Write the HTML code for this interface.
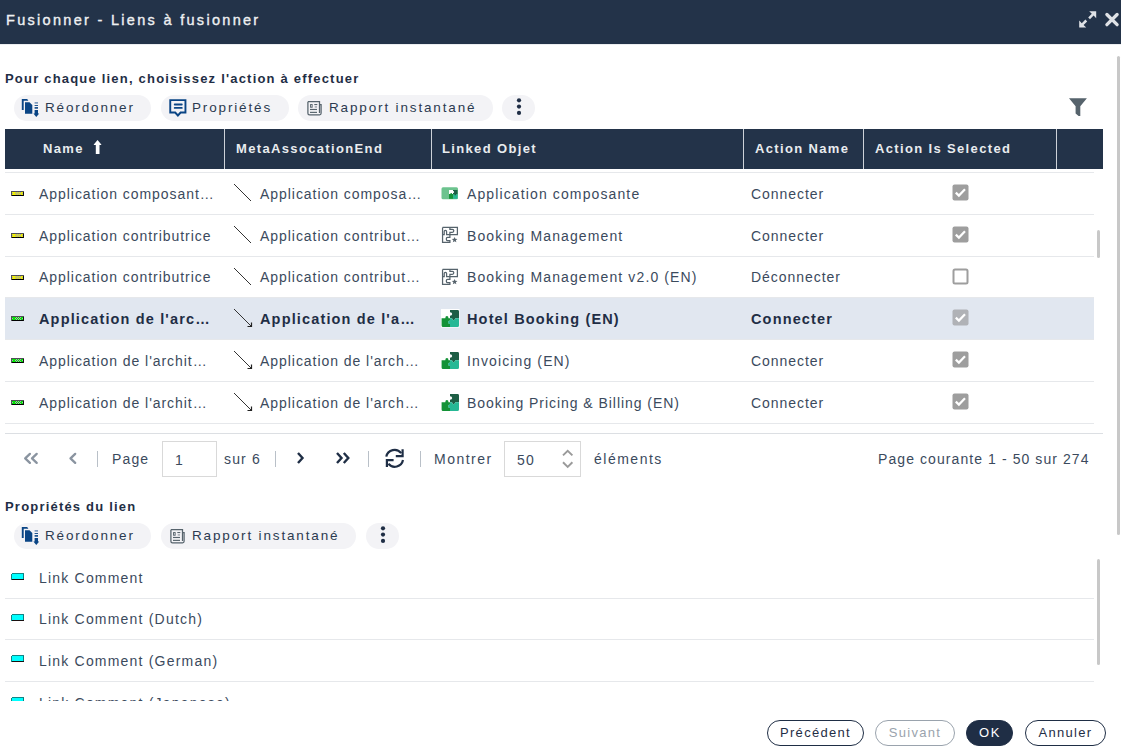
<!DOCTYPE html>
<html><head><meta charset="utf-8">
<style>
*{box-sizing:border-box;margin:0;padding:0}
html,body{width:1121px;height:753px;overflow:hidden;background:#fff;font-family:"Liberation Sans",sans-serif;color:#3b4a5d}
.a{position:absolute;white-space:nowrap}
#title{left:0;top:0;width:1121px;height:44px;background:#233349}
#title .t{left:6px;top:12px;font-size:14.5px;font-weight:400;color:#eef0f2;letter-spacing:2.3px;-webkit-text-stroke:0.35px #eef0f2}
.h2{font-size:13px;font-weight:700;color:#1f2e45;letter-spacing:1.2px}
.pill{position:absolute;height:26px;border-radius:13px;background:#f3f3f6}
.pt{font-size:13.5px;letter-spacing:1.85px;color:#2b3a50}
.hdr{left:5px;top:129px;width:1098px;height:40px;background:#233349}
.hc{position:absolute;top:0;height:40px;width:1px;background:#cdd2d8}
.ht{position:absolute;top:12px;font-size:13px;font-weight:700;color:#e9ecef;letter-spacing:1.35px;white-space:nowrap}
.line{position:absolute;height:1px;background:#e6e8eb}
.rt{font-size:14px;letter-spacing:0.95px;color:#3b4a5d}
.rt.b{font-weight:700;color:#1f2e45;font-size:14.5px;letter-spacing:1.15px}
.pg{font-size:14px;letter-spacing:1.15px;color:#3b4a5d}
.lc{letter-spacing:1.2px}
.sep{position:absolute;width:1px;height:16px;background:#b9c0c8}
.btn{position:absolute;top:720px;height:26px;border-radius:13px;border:1px solid #1f2e45;font-size:13px;letter-spacing:1.3px;color:#1f2e45;text-align:center;line-height:24px}
</style></head>
<body>
<div id="title" class="a"><div class="a t">Fusionner - Liens à fusionner</div>
<svg class="a" style="left:1078px;top:10px" width="20" height="19" viewBox="0 0 20 19">
<path d="M11.2 1.2 H18.2 V8.2 L15.6 5.6 L12 9.2 L10.2 7.4 L13.8 3.8 Z" fill="#dfe2e6"/>
<path d="M1.2 17.6 V10.6 L3.8 13.2 L7.4 9.6 L9.2 11.4 L5.6 15 L8.2 17.6 Z" fill="#dfe2e6"/>
</svg>
<svg class="a" style="left:1104px;top:12px" width="16" height="16" viewBox="0 0 16 16">
<path d="M2.9 2.5 L13.1 12.7 M13.1 2.5 L2.9 12.7" stroke="#dfe2e6" stroke-width="3.3" stroke-linecap="round"/>
</svg>
</div>
<div class="a" style="left:0;top:44px;width:1121px;height:1px;background:#ebedf0"></div>
<div class="a" style="left:1117px;top:56px;width:3px;height:479px;border-radius:1.5px;background:#c8c8c8"></div>

<div class="a h2" style="left:5px;top:71px">Pour chaque lien, choisissez l'action à effectuer</div>

<div class="pill" style="left:14px;top:95px;width:137px"></div>
<div class="pill" style="left:161px;top:95px;width:128px"></div>
<div class="pill" style="left:298px;top:95px;width:195px"></div>
<div class="pill" style="left:502px;top:95px;width:33px"></div>
<svg class="a" style="left:18px;top:97px" width="22" height="21" viewBox="0 0 22 21"><path d="M3.8 2 H9.2 L10.4 3.8 H5.7 V13 H3.8 Z" fill="#0a4585"/><path d="M7 5.2 H11.5 L14.3 8 V16.7 H7 Z" fill="#0a4585"/><g fill="#0a4585"><rect x="16.6" y="5.2" width="3.4" height="1.4" opacity="0.6"/><rect x="16.6" y="8" width="3.4" height="0.9"/><rect x="16.6" y="10.1" width="3.4" height="1.6"/><rect x="16.6" y="13" width="3.4" height="4"/><path d="M15.4 16.6 H21.2 L18.3 20 Z"/></g></svg>
<svg class="a" style="left:166px;top:96px" width="24" height="24" viewBox="0 0 24 24"><path d="M4.25 4.15 H19.45 V16.55 H14.6 L11.9 19.5 L9.2 16.55 H4.25 Z" fill="none" stroke="#0a4585" stroke-width="1.9" stroke-linejoin="miter"/><rect x="7.8" y="7.6" width="8.9" height="1.8" rx="0.9" fill="#0a4585"/><rect x="7.8" y="11" width="8.9" height="1.8" rx="0.9" fill="#0a4585"/></svg>
<svg class="a" style="left:302px;top:97px" width="22" height="22" viewBox="0 0 22 22"><g fill="none" stroke="#56636c" stroke-width="1.25"><path d="M5.9 4.7 H17.5 V15.9"/><path d="M5.9 4.7 V16.2 Q5.9 17.8 7.5 17.8 H17.6 Q19.1 17.8 19.1 16.3 V7.7 H17.5"/><rect x="8.7" y="7.7" width="1.3" height="2.4"/></g><g fill="#56636c"><rect x="12.3" y="7" width="3" height="1.1"/><rect x="12.7" y="9.4" width="2.3" height="1.1" opacity="0.7"/><rect x="8" y="11.9" width="7" height="1.15"/><rect x="8" y="14.8" width="7" height="1.15"/></g></svg>
<svg class="a" style="left:515px;top:98px" width="8" height="18" viewBox="0 0 8 18"><circle cx="4" cy="2.3" r="2.1" fill="#1f2e45"/><circle cx="4" cy="8.6" r="2.1" fill="#1f2e45"/><circle cx="4" cy="14.9" r="2.1" fill="#1f2e45"/></svg>
<div class="a pt" style="left:45px;top:100px">Réordonner</div>
<div class="a pt" style="left:192px;top:100px">Propriétés</div>
<div class="a pt" style="left:329px;top:100px">Rapport instantané</div>

<svg class="a" style="left:1068px;top:97px" width="20" height="20" viewBox="0 0 20 20">
<path d="M1 1.3 H18.9 L12.3 9.2 V19 H10.6 L7.6 16.6 V9.2 Z" fill="#56636c"/>
</svg>

<div class="a hdr">
  <div class="ht" style="left:38px">Name</div>
  <svg class="a" style="left:88px;top:10px" width="10" height="17" viewBox="0 0 10 17"><path d="M4.55 1 L8.3 5.4 V5.9 H6.5 V15.1 H2.8 V5.9 H0.8 V5.4 Z" fill="#fff"/></svg>
  <div class="hc" style="left:219px"></div>
  <div class="ht" style="left:231px">MetaAssocationEnd</div>
  <div class="hc" style="left:426px"></div>
  <div class="ht" style="left:437px">Linked Objet</div>
  <div class="hc" style="left:738px"></div>
  <div class="ht" style="left:750px">Action Name</div>
  <div class="hc" style="left:858px"></div>
  <div class="ht" style="left:870px">Action Is Selected</div>
  <div class="hc" style="left:1051px"></div>
</div>

<svg class="a" style="left:11px;top:191px" width="13" height="5" viewBox="0 0 13 5" shape-rendering="crispEdges"><rect x="0" y="0" width="13" height="5" fill="#505058"/><rect x="1" y="4" width="12" height="1" fill="#000"/><rect x="12" y="1" width="1" height="4" fill="#111"/><rect x="1" y="1" width="11" height="3" fill="#f2f200"/><g fill="#a0a0b0"><rect x="5" y="1" width="1" height="1"/><rect x="7" y="1" width="1" height="1"/><rect x="9" y="1" width="1" height="1"/><rect x="1" y="2" width="1" height="1"/><rect x="4" y="2" width="1" height="1"/><rect x="6" y="2" width="1" height="1"/><rect x="8" y="2" width="1" height="1"/><rect x="11" y="2" width="1" height="1"/><rect x="5" y="3" width="1" height="1"/><rect x="7" y="3" width="1" height="1"/><rect x="9" y="3" width="1" height="1"/></g></svg>
<div class="a rt" style="left:39px;top:186px">Application composant…</div>
<svg class="a" style="left:233px;top:183px" width="20" height="20" viewBox="0 0 20 20"><line x1="1" y1="1" x2="18" y2="18" stroke="#333" stroke-width="1"/></svg>
<div class="a rt" style="left:260px;top:186px">Application composa…</div>
<svg class="a" style="left:441px;top:187px" width="18" height="13" viewBox="0 0 18 13"><rect x="0.5" y="0.2" width="16.5" height="12" rx="1.5" fill="#6cc38e"/><rect x="8" y="3" width="4.5" height="4" fill="#fff"/><rect x="12" y="3" width="4.5" height="4.3" fill="#1d5e45"/><rect x="8" y="7" width="4.3" height="4.8" fill="#169238"/><rect x="12.3" y="7.3" width="4.2" height="4.5" fill="#27b795"/><circle cx="12.2" cy="5" r="0.9" fill="#fff"/><circle cx="10.2" cy="7" r="0.9" fill="#169238"/><circle cx="14.3" cy="7.4" r="0.9" fill="#1d5e45"/></svg>
<div class="a rt" style="left:467px;top:186px;letter-spacing:1.12px">Application composante</div>
<div class="a rt" style="left:751px;top:186px">Connecter</div>
<svg class="a" style="left:952px;top:184px" width="17" height="17" viewBox="0 0 17 17"><rect x="0.5" y="0.5" width="16" height="16" rx="2" fill="#9e9e9e"/><path d="M3.8 8.6 L6.9 11.6 L13 5.3" fill="none" stroke="#fff" stroke-width="2.2"/></svg>
<svg class="a" style="left:11px;top:233px" width="13" height="5" viewBox="0 0 13 5" shape-rendering="crispEdges"><rect x="0" y="0" width="13" height="5" fill="#505058"/><rect x="1" y="4" width="12" height="1" fill="#000"/><rect x="12" y="1" width="1" height="4" fill="#111"/><rect x="1" y="1" width="11" height="3" fill="#f2f200"/><g fill="#a0a0b0"><rect x="5" y="1" width="1" height="1"/><rect x="7" y="1" width="1" height="1"/><rect x="9" y="1" width="1" height="1"/><rect x="1" y="2" width="1" height="1"/><rect x="4" y="2" width="1" height="1"/><rect x="6" y="2" width="1" height="1"/><rect x="8" y="2" width="1" height="1"/><rect x="11" y="2" width="1" height="1"/><rect x="5" y="3" width="1" height="1"/><rect x="7" y="3" width="1" height="1"/><rect x="9" y="3" width="1" height="1"/></g></svg>
<div class="a rt" style="left:39px;top:228px">Application contributrice</div>
<svg class="a" style="left:233px;top:225px" width="20" height="20" viewBox="0 0 20 20"><line x1="1" y1="1" x2="18" y2="18" stroke="#333" stroke-width="1"/></svg>
<div class="a rt" style="left:260px;top:228px">Application contribut…</div>
<svg class="a" style="left:438px;top:222px" width="24" height="26" viewBox="0 0 24 26"><g fill="none" stroke="#56636c" stroke-width="1.25"><path d="M4.56 5.42 H19.4 V12.67 H8.6 V9.6 Q8.6 8.3 7.4 8.3 Q6.2 8.3 6.2 9.6 V12.67 H4.56"/><path d="M4.56 5.42 V20.27 H11.9 V18.6 H9.6 Q8.3 18.6 8.3 17 Q8.3 15.3 9.6 15.3 H11.9 V12.67"/><path d="M11.9 5.42 V7.3 H14.3 Q15.8 7.3 15.8 8.8 Q15.8 10.3 14.3 10.3 H11.9 V12.67"/></g><path d="M16.60 14.90 L17.36 16.85 L19.45 16.97 L17.84 18.30 L18.36 20.33 L16.60 19.20 L14.84 20.33 L15.36 18.30 L13.75 16.97 L15.84 16.85 Z" fill="#56636c"/></svg>
<div class="a rt" style="left:467px;top:228px;letter-spacing:1.12px">Booking Management</div>
<div class="a rt" style="left:751px;top:228px">Connecter</div>
<svg class="a" style="left:952px;top:226px" width="17" height="17" viewBox="0 0 17 17"><rect x="0.5" y="0.5" width="16" height="16" rx="2" fill="#9e9e9e"/><path d="M3.8 8.6 L6.9 11.6 L13 5.3" fill="none" stroke="#fff" stroke-width="2.2"/></svg>
<svg class="a" style="left:11px;top:275px" width="13" height="5" viewBox="0 0 13 5" shape-rendering="crispEdges"><rect x="0" y="0" width="13" height="5" fill="#505058"/><rect x="1" y="4" width="12" height="1" fill="#000"/><rect x="12" y="1" width="1" height="4" fill="#111"/><rect x="1" y="1" width="11" height="3" fill="#f2f200"/><g fill="#a0a0b0"><rect x="5" y="1" width="1" height="1"/><rect x="7" y="1" width="1" height="1"/><rect x="9" y="1" width="1" height="1"/><rect x="1" y="2" width="1" height="1"/><rect x="4" y="2" width="1" height="1"/><rect x="6" y="2" width="1" height="1"/><rect x="8" y="2" width="1" height="1"/><rect x="11" y="2" width="1" height="1"/><rect x="5" y="3" width="1" height="1"/><rect x="7" y="3" width="1" height="1"/><rect x="9" y="3" width="1" height="1"/></g></svg>
<div class="a rt" style="left:39px;top:269px">Application contributrice</div>
<svg class="a" style="left:233px;top:267px" width="20" height="20" viewBox="0 0 20 20"><line x1="1" y1="1" x2="18" y2="18" stroke="#333" stroke-width="1"/></svg>
<div class="a rt" style="left:260px;top:269px">Application contribut…</div>
<svg class="a" style="left:438px;top:264px" width="24" height="26" viewBox="0 0 24 26"><g fill="none" stroke="#56636c" stroke-width="1.25"><path d="M4.56 5.42 H19.4 V12.67 H8.6 V9.6 Q8.6 8.3 7.4 8.3 Q6.2 8.3 6.2 9.6 V12.67 H4.56"/><path d="M4.56 5.42 V20.27 H11.9 V18.6 H9.6 Q8.3 18.6 8.3 17 Q8.3 15.3 9.6 15.3 H11.9 V12.67"/><path d="M11.9 5.42 V7.3 H14.3 Q15.8 7.3 15.8 8.8 Q15.8 10.3 14.3 10.3 H11.9 V12.67"/></g><path d="M16.60 14.90 L17.36 16.85 L19.45 16.97 L17.84 18.30 L18.36 20.33 L16.60 19.20 L14.84 20.33 L15.36 18.30 L13.75 16.97 L15.84 16.85 Z" fill="#56636c"/></svg>
<div class="a rt" style="left:467px;top:269px;letter-spacing:1.12px">Booking Management v2.0 (EN)</div>
<div class="a rt" style="left:751px;top:269px">Déconnecter</div>
<svg class="a" style="left:952px;top:268px" width="17" height="17" viewBox="0 0 17 17"><rect x="1.5" y="1.5" width="14" height="14" rx="1.5" fill="#fff" stroke="#9e9e9e" stroke-width="2"/></svg>
<div class="a" style="left:5px;top:298px;width:1089px;height:42px;background:#e1e7f0"></div>
<svg class="a" style="left:11px;top:316px" width="13" height="5" viewBox="0 0 13 5" shape-rendering="crispEdges"><rect x="0" y="0" width="13" height="5" fill="#505058"/><rect x="1" y="4" width="12" height="1" fill="#000"/><rect x="12" y="1" width="1" height="4" fill="#111"/><rect x="1" y="1" width="11" height="3" fill="#00e600"/><g fill="#b0a0b8"><rect x="5" y="1" width="1" height="1"/><rect x="7" y="1" width="1" height="1"/><rect x="9" y="1" width="1" height="1"/><rect x="1" y="2" width="1" height="1"/><rect x="4" y="2" width="1" height="1"/><rect x="6" y="2" width="1" height="1"/><rect x="8" y="2" width="1" height="1"/><rect x="11" y="2" width="1" height="1"/><rect x="5" y="3" width="1" height="1"/><rect x="7" y="3" width="1" height="1"/><rect x="9" y="3" width="1" height="1"/></g></svg>
<div class="a rt b" style="left:39px;top:311px">Application de l'arc…</div>
<svg class="a" style="left:233px;top:308px" width="20" height="20" viewBox="0 0 20 20"><line x1="1" y1="1" x2="18" y2="18" stroke="#333" stroke-width="1"/><path d="M14.5 18.5 H18.5 V14.5" fill="none" stroke="#222" stroke-width="1.2"/></svg>
<div class="a rt b" style="left:260px;top:311px">Application de l'a…</div>
<svg class="a" style="left:441px;top:309px" width="19" height="19" viewBox="0 0 19 19"><rect x="0" y="0" width="18.5" height="18.5" fill="#fff"/><path d="M9 1 H17 Q18 1 18 2.5 V9.2 H14.2 Q13.8 11.2 12.6 11.2 Q11.4 11.2 11 9.2 H9 V6.8 Q11.2 6.8 11.2 5 Q11.2 3.3 9 3.3 Z" fill="#1d5e45"/><path d="M9 9.2 H11 Q11.4 11.2 12.6 11.2 Q13.8 11.2 14.2 9.2 H18 V16.5 Q18 18 16.5 18 H9 V15 Q7 15 7 13.3 Q7 11.6 9 11.6 Z" fill="#26b895"/><path d="M0.6 9.2 H4.3 Q4.3 7 5.9 7 Q7.5 7 7.5 9.2 H9 V11.6 Q7 11.6 7 13.3 Q7 15 9 15 V18 H2 Q0.6 18 0.6 16.5 Z" fill="#139236"/></svg>
<div class="a rt b" style="left:467px;top:311px">Hotel Booking (EN)</div>
<div class="a rt b" style="left:751px;top:311px">Connecter</div>
<svg class="a" style="left:952px;top:309px" width="17" height="17" viewBox="0 0 17 17"><rect x="0.5" y="0.5" width="16" height="16" rx="2" fill="#b0b2b6"/><path d="M3.8 8.6 L6.9 11.6 L13 5.3" fill="none" stroke="#fff" stroke-width="2.2"/></svg>
<svg class="a" style="left:11px;top:358px" width="13" height="5" viewBox="0 0 13 5" shape-rendering="crispEdges"><rect x="0" y="0" width="13" height="5" fill="#505058"/><rect x="1" y="4" width="12" height="1" fill="#000"/><rect x="12" y="1" width="1" height="4" fill="#111"/><rect x="1" y="1" width="11" height="3" fill="#00e600"/><g fill="#b0a0b8"><rect x="5" y="1" width="1" height="1"/><rect x="7" y="1" width="1" height="1"/><rect x="9" y="1" width="1" height="1"/><rect x="1" y="2" width="1" height="1"/><rect x="4" y="2" width="1" height="1"/><rect x="6" y="2" width="1" height="1"/><rect x="8" y="2" width="1" height="1"/><rect x="11" y="2" width="1" height="1"/><rect x="5" y="3" width="1" height="1"/><rect x="7" y="3" width="1" height="1"/><rect x="9" y="3" width="1" height="1"/></g></svg>
<div class="a rt" style="left:39px;top:353px">Application de l'archit…</div>
<svg class="a" style="left:233px;top:350px" width="20" height="20" viewBox="0 0 20 20"><line x1="1" y1="1" x2="18" y2="18" stroke="#333" stroke-width="1"/><path d="M14.5 18.5 H18.5 V14.5" fill="none" stroke="#222" stroke-width="1.2"/></svg>
<div class="a rt" style="left:260px;top:353px">Application de l'arch…</div>
<svg class="a" style="left:441px;top:351px" width="19" height="19" viewBox="0 0 19 19"><path d="M9 1 H17 Q18 1 18 2.5 V9.2 H14.2 Q13.8 11.2 12.6 11.2 Q11.4 11.2 11 9.2 H9 V6.8 Q11.2 6.8 11.2 5 Q11.2 3.3 9 3.3 Z" fill="#1d5e45"/><path d="M9 9.2 H11 Q11.4 11.2 12.6 11.2 Q13.8 11.2 14.2 9.2 H18 V16.5 Q18 18 16.5 18 H9 V15 Q7 15 7 13.3 Q7 11.6 9 11.6 Z" fill="#26b895"/><path d="M0.6 9.2 H4.3 Q4.3 7 5.9 7 Q7.5 7 7.5 9.2 H9 V11.6 Q7 11.6 7 13.3 Q7 15 9 15 V18 H2 Q0.6 18 0.6 16.5 Z" fill="#139236"/></svg>
<div class="a rt" style="left:467px;top:353px;letter-spacing:1.12px">Invoicing (EN)</div>
<div class="a rt" style="left:751px;top:353px">Connecter</div>
<svg class="a" style="left:952px;top:351px" width="17" height="17" viewBox="0 0 17 17"><rect x="0.5" y="0.5" width="16" height="16" rx="2" fill="#9e9e9e"/><path d="M3.8 8.6 L6.9 11.6 L13 5.3" fill="none" stroke="#fff" stroke-width="2.2"/></svg>
<svg class="a" style="left:11px;top:400px" width="13" height="5" viewBox="0 0 13 5" shape-rendering="crispEdges"><rect x="0" y="0" width="13" height="5" fill="#505058"/><rect x="1" y="4" width="12" height="1" fill="#000"/><rect x="12" y="1" width="1" height="4" fill="#111"/><rect x="1" y="1" width="11" height="3" fill="#00e600"/><g fill="#b0a0b8"><rect x="5" y="1" width="1" height="1"/><rect x="7" y="1" width="1" height="1"/><rect x="9" y="1" width="1" height="1"/><rect x="1" y="2" width="1" height="1"/><rect x="4" y="2" width="1" height="1"/><rect x="6" y="2" width="1" height="1"/><rect x="8" y="2" width="1" height="1"/><rect x="11" y="2" width="1" height="1"/><rect x="5" y="3" width="1" height="1"/><rect x="7" y="3" width="1" height="1"/><rect x="9" y="3" width="1" height="1"/></g></svg>
<div class="a rt" style="left:39px;top:395px">Application de l'archit…</div>
<svg class="a" style="left:233px;top:392px" width="20" height="20" viewBox="0 0 20 20"><line x1="1" y1="1" x2="18" y2="18" stroke="#333" stroke-width="1"/><path d="M14.5 18.5 H18.5 V14.5" fill="none" stroke="#222" stroke-width="1.2"/></svg>
<div class="a rt" style="left:260px;top:395px">Application de l'arch…</div>
<svg class="a" style="left:441px;top:393px" width="19" height="19" viewBox="0 0 19 19"><path d="M9 1 H17 Q18 1 18 2.5 V9.2 H14.2 Q13.8 11.2 12.6 11.2 Q11.4 11.2 11 9.2 H9 V6.8 Q11.2 6.8 11.2 5 Q11.2 3.3 9 3.3 Z" fill="#1d5e45"/><path d="M9 9.2 H11 Q11.4 11.2 12.6 11.2 Q13.8 11.2 14.2 9.2 H18 V16.5 Q18 18 16.5 18 H9 V15 Q7 15 7 13.3 Q7 11.6 9 11.6 Z" fill="#26b895"/><path d="M0.6 9.2 H4.3 Q4.3 7 5.9 7 Q7.5 7 7.5 9.2 H9 V11.6 Q7 11.6 7 13.3 Q7 15 9 15 V18 H2 Q0.6 18 0.6 16.5 Z" fill="#139236"/></svg>
<div class="a rt" style="left:467px;top:395px;letter-spacing:0.95px">Booking Pricing &amp; Billing (EN)</div>
<div class="a rt" style="left:751px;top:395px">Connecter</div>
<svg class="a" style="left:952px;top:393px" width="17" height="17" viewBox="0 0 17 17"><rect x="0.5" y="0.5" width="16" height="16" rx="2" fill="#9e9e9e"/><path d="M3.8 8.6 L6.9 11.6 L13 5.3" fill="none" stroke="#fff" stroke-width="2.2"/></svg>
<div class="line" style="left:5px;top:172px;width:1089px"></div>
<div class="line" style="left:5px;top:214px;width:1089px"></div>
<div class="line" style="left:5px;top:256px;width:1089px"></div>
<div class="line" style="left:5px;top:297px;width:1089px"></div>
<div class="line" style="left:5px;top:339px;width:1089px"></div>
<div class="line" style="left:5px;top:381px;width:1089px"></div>
<div class="line" style="left:5px;top:423px;width:1089px"></div>
<div class="a" style="left:1097px;top:230px;width:3px;height:28px;border-radius:1.5px;background:#c8c8c8"></div>

<div class="line" style="left:5px;top:433px;width:1098px;background:#dcdfe3"></div>

<svg class="a" style="left:22px;top:451px" width="18" height="14" viewBox="0 0 18 14">
<path d="M7.9 2.9 L3.2 7.4 L7.9 11.9 M14.7 2.9 L10 7.4 L14.7 11.9" fill="none" stroke="#8a94a0" stroke-width="2.3" stroke-linecap="round" stroke-linejoin="round"/></svg>
<svg class="a" style="left:66px;top:451px" width="12" height="14" viewBox="0 0 12 14">
<path d="M9.2 2.9 L4.5 7.4 L9.2 11.9" fill="none" stroke="#8a94a0" stroke-width="2.3" stroke-linecap="round" stroke-linejoin="round"/></svg>
<div class="sep" style="left:97px;top:451px"></div>
<div class="a pg" style="left:112px;top:451px">Page</div>
<div class="a" style="left:162px;top:441px;width:55px;height:36px;border:1px solid #d9d9d9"></div>
<div class="a pg" style="left:175px;top:452px">1</div>
<div class="a pg" style="left:224px;top:451px">sur 6</div>
<div class="sep" style="left:275px;top:451px"></div>
<svg class="a" style="left:294px;top:451px" width="12" height="14" viewBox="0 0 12 14">
<path d="M4 2 L8.5 7 L4 12" fill="none" stroke="#1f2e45" stroke-width="2.4"/></svg>
<svg class="a" style="left:333px;top:451px" width="18" height="14" viewBox="0 0 18 14">
<path d="M4 2 L8.5 7 L4 12 M10.8 2 L15.3 7 L10.8 12" fill="none" stroke="#1f2e45" stroke-width="2.4"/></svg>
<div class="sep" style="left:368px;top:451px"></div>
<svg class="a" style="left:380px;top:444px" width="30" height="30" viewBox="0 0 30 30">
<g fill="none" stroke="#1f2e45" stroke-width="2.2">
<path d="M6.3 12.6 A8.4 8.4 0 0 1 21.2 9.2"/><path d="M22.6 5.2 V12.2 H15.8"/>
<path d="M23 16 A8.4 8.4 0 0 1 8.4 19.8"/><path d="M6.9 23 V16.2 H13.6"/>
</g></svg>
<div class="sep" style="left:420px;top:451px"></div>
<div class="a pg" style="left:434px;top:451px;letter-spacing:1.5px">Montrer</div>
<div class="a" style="left:504px;top:441px;width:77px;height:36px;border:1px solid #d9d9d9"></div>
<div class="a pg" style="left:517px;top:452px">50</div>
<svg class="a" style="left:561px;top:449px" width="14" height="21" viewBox="0 0 14 21">
<path d="M2 6.4 L6.7 1.8 L11.4 6.4 M2 13.3 L6.7 17.9 L11.4 13.3" fill="none" stroke="#9a9a9a" stroke-width="1.9"/></svg>
<div class="a pg" style="left:594px;top:451px;letter-spacing:1.5px">éléments</div>
<div class="a pg" style="left:878px;top:451px;letter-spacing:1.08px">Page courante 1 - 50 sur 274</div>

<div class="a h2" style="left:5px;top:499px">Propriétés du lien</div>
<div class="pill" style="left:14px;top:523px;width:137px"></div>
<div class="pill" style="left:161px;top:523px;width:195px"></div>
<div class="pill" style="left:366px;top:523px;width:33px"></div>
<svg class="a" style="left:18px;top:525px" width="22" height="21" viewBox="0 0 22 21"><path d="M3.8 2 H9.2 L10.4 3.8 H5.7 V13 H3.8 Z" fill="#0a4585"/><path d="M7 5.2 H11.5 L14.3 8 V16.7 H7 Z" fill="#0a4585"/><g fill="#0a4585"><rect x="16.6" y="5.2" width="3.4" height="1.4" opacity="0.6"/><rect x="16.6" y="8" width="3.4" height="0.9"/><rect x="16.6" y="10.1" width="3.4" height="1.6"/><rect x="16.6" y="13" width="3.4" height="4"/><path d="M15.4 16.6 H21.2 L18.3 20 Z"/></g></svg>
<svg class="a" style="left:165px;top:525px" width="22" height="22" viewBox="0 0 22 22"><g fill="none" stroke="#56636c" stroke-width="1.25"><path d="M5.9 4.7 H17.5 V15.9"/><path d="M5.9 4.7 V16.2 Q5.9 17.8 7.5 17.8 H17.6 Q19.1 17.8 19.1 16.3 V7.7 H17.5"/><rect x="8.7" y="7.7" width="1.3" height="2.4"/></g><g fill="#56636c"><rect x="12.3" y="7" width="3" height="1.1"/><rect x="12.7" y="9.4" width="2.3" height="1.1" opacity="0.7"/><rect x="8" y="11.9" width="7" height="1.15"/><rect x="8" y="14.8" width="7" height="1.15"/></g></svg>
<svg class="a" style="left:379px;top:526px" width="8" height="18" viewBox="0 0 8 18"><circle cx="4" cy="2.3" r="2.1" fill="#1f2e45"/><circle cx="4" cy="8.6" r="2.1" fill="#1f2e45"/><circle cx="4" cy="14.9" r="2.1" fill="#1f2e45"/></svg>
<div class="a pt" style="left:45px;top:528px">Réordonner</div>
<div class="a pt" style="left:192px;top:528px">Rapport instantané</div>

<div class="a" style="left:0;top:557px;width:1121px;height:144px;overflow:hidden">
<div class="a" style="left:0;top:-557px;width:1121px;height:753px">
<svg class="a" style="left:11px;top:573px" width="13" height="7" viewBox="0 0 13 7" shape-rendering="crispEdges"><rect x="1" y="0" width="12" height="1" fill="#138585"/><rect x="0" y="1" width="1" height="6" fill="#138585"/><rect x="1" y="1" width="11" height="5" fill="#00ffff"/><rect x="12" y="1" width="1" height="5" fill="#0a8080"/><rect x="1" y="6" width="12" height="1" fill="#1a1010"/></svg>
<div class="a rt lc" style="left:39px;top:570px">Link Comment</div>
<svg class="a" style="left:11px;top:614px" width="13" height="7" viewBox="0 0 13 7" shape-rendering="crispEdges"><rect x="1" y="0" width="12" height="1" fill="#138585"/><rect x="0" y="1" width="1" height="6" fill="#138585"/><rect x="1" y="1" width="11" height="5" fill="#00ffff"/><rect x="12" y="1" width="1" height="5" fill="#0a8080"/><rect x="1" y="6" width="12" height="1" fill="#1a1010"/></svg>
<div class="a rt lc" style="left:39px;top:611px">Link Comment (Dutch)</div>
<svg class="a" style="left:11px;top:655px" width="13" height="7" viewBox="0 0 13 7" shape-rendering="crispEdges"><rect x="1" y="0" width="12" height="1" fill="#138585"/><rect x="0" y="1" width="1" height="6" fill="#138585"/><rect x="1" y="1" width="11" height="5" fill="#00ffff"/><rect x="12" y="1" width="1" height="5" fill="#0a8080"/><rect x="1" y="6" width="12" height="1" fill="#1a1010"/></svg>
<div class="a rt lc" style="left:39px;top:653px">Link Comment (German)</div>
<svg class="a" style="left:11px;top:697px" width="13" height="7" viewBox="0 0 13 7" shape-rendering="crispEdges"><rect x="1" y="0" width="12" height="1" fill="#138585"/><rect x="0" y="1" width="1" height="6" fill="#138585"/><rect x="1" y="1" width="11" height="5" fill="#00ffff"/><rect x="12" y="1" width="1" height="5" fill="#0a8080"/><rect x="1" y="6" width="12" height="1" fill="#1a1010"/></svg>
<div class="a rt lc" style="left:39px;top:695px">Link Comment (Japanese)</div>
<div class="line" style="left:5px;top:598px;width:1089px"></div>
<div class="line" style="left:5px;top:639px;width:1089px"></div>
<div class="line" style="left:5px;top:681px;width:1089px"></div>
</div></div>
<div class="a" style="left:1097px;top:559px;width:3px;height:106px;border-radius:1.5px;background:#c8c8c8"></div>

<div class="btn" style="left:767px;width:97px">Précédent</div>
<div class="btn" style="left:875px;width:80px;border-color:#9aa3ad;color:#9aa3ad">Suivant</div>
<div class="btn" style="left:966px;width:47px;background:#1f2e45;color:#fff;letter-spacing:1.5px;padding-left:1px">OK</div>
<div class="btn" style="left:1025px;width:81px">Annuler</div>
</body></html>
